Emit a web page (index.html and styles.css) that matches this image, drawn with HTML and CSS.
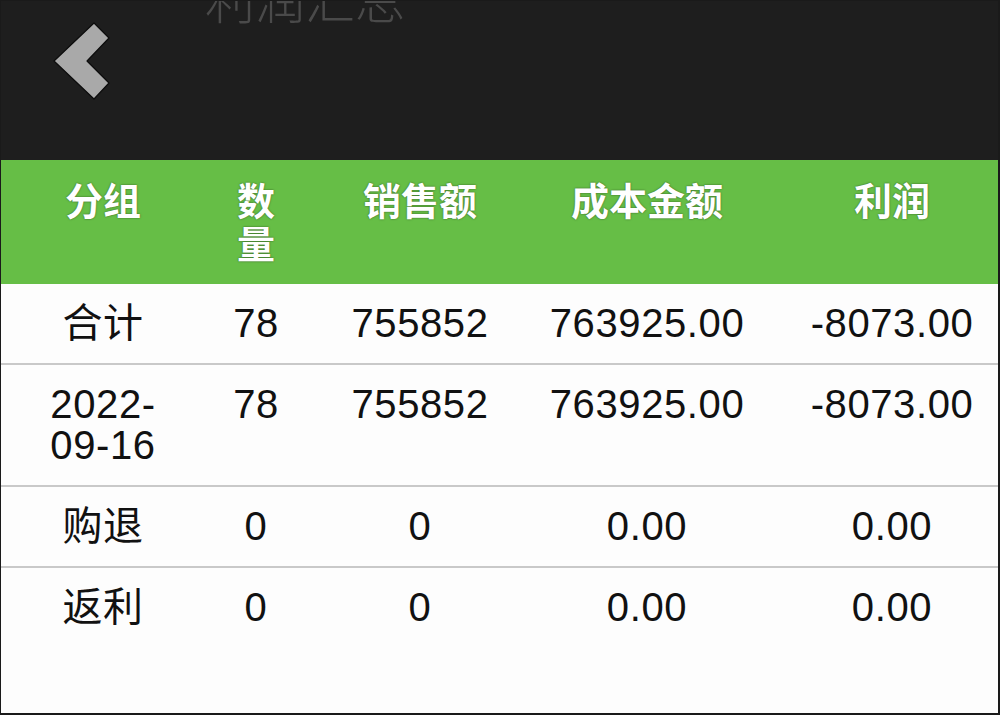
FILE: index.html
```html
<!DOCTYPE html>
<html lang="zh-CN">
<head>
<meta charset="utf-8">
<title>利润汇总</title>
<link rel="stylesheet" href="styles.css">
</head>
<body>
<div class="screen">
  <header class="topbar">
    <div class="title">利润汇总</div>
    <svg class="back" width="70" height="90" viewBox="0 0 70 90" aria-label="返回">
      <polygon points="8,45 48,7 63,22 41,45 63,67 48,83" fill="#a9a9a9" stroke="#0c0c0c" stroke-width="1.2" stroke-linejoin="round"/>
    </svg>
  </header>
  <table class="report">
    <colgroup>
      <col class="c1"><col class="c2"><col class="c3"><col class="c4"><col class="c5">
    </colgroup>
    <thead>
      <tr>
        <th class="grp">分组</th>
        <th class="qty">数量</th>
        <th>销售额</th>
        <th>成本金额</th>
        <th class="last">利润</th>
      </tr>
    </thead>
    <tbody>
      <tr>
        <td class="grp">合计</td>
        <td class="qty">78</td>
        <td>755852</td>
        <td>763925.00</td>
        <td class="last">-8073.00</td>
      </tr>
      <tr>
        <td class="grp">2022-09-16</td>
        <td class="qty">78</td>
        <td>755852</td>
        <td>763925.00</td>
        <td class="last">-8073.00</td>
      </tr>
      <tr>
        <td class="grp">购退</td>
        <td class="qty">0</td>
        <td>0</td>
        <td>0.00</td>
        <td class="last">0.00</td>
      </tr>
      <tr class="end">
        <td class="grp">返利</td>
        <td class="qty">0</td>
        <td>0</td>
        <td>0.00</td>
        <td class="last">0.00</td>
      </tr>
    </tbody>
  </table>
</div>
</body>
</html>
```

FILE: styles.css
```css
* { box-sizing: border-box; }
html, body { margin: 0; padding: 0; background: #fff; }
body {
  font-family: "Liberation Sans", "Noto Sans CJK SC", sans-serif;
  color: #111;
}
.screen {
  width: 1000px;
  height: 715px;
  border: 1px solid #1a1a1a;
  border-right-width: 2px;
  border-bottom-width: 2px;
  overflow: hidden;
  background: #fdfdfd;
}
.topbar {
  height: 159px;
  background: #1e1e1e;
  overflow: hidden;
}
.title {
  margin-top: -29px;
  padding-left: 204px;
  height: 50px;
  font-family: "Noto Sans CJK SC", sans-serif;
  font-size: 50px;
  line-height: 50px;
  font-weight: 300;
  color: #4a4a4a;
}
.back {
  display: block;
  margin: -6px 0 0 45px;
}
.report {
  width: 997px;
  border-collapse: collapse;
  table-layout: fixed;
}
.c1 { width: 204px; }
.c2 { width: 102px; }
.c3 { width: 226px; }
.c4 { width: 228px; }
.c5 { width: 237px; }
.report th {
  background: #66be46;
  color: #fff;
  font-family: "Noto Sans CJK SC", sans-serif;
  font-weight: 700;
  font-size: 38px;
  line-height: 43px;
  padding: 17px 14px 21px;
  text-align: center;
  vertical-align: top;
  text-shadow: 0 0 2px rgba(0, 0, 0, 0.55);
}
.report td {
  font-size: 40px;
  line-height: 41px;
  letter-spacing: 0.6px;
  padding: 19px 10px 19px;
  text-align: center;
  vertical-align: top;
  border-bottom: 2px solid #c9c9c9;
  background: #fdfdfd;
}
.report tr.end td { border-bottom: none; }
.report .grp { padding-left: 40px; padding-right: 40px; }
.report .qty { padding-left: 16px; padding-right: 16px; }
.report .last { padding-left: 35px; padding-right: 10px; }
```
